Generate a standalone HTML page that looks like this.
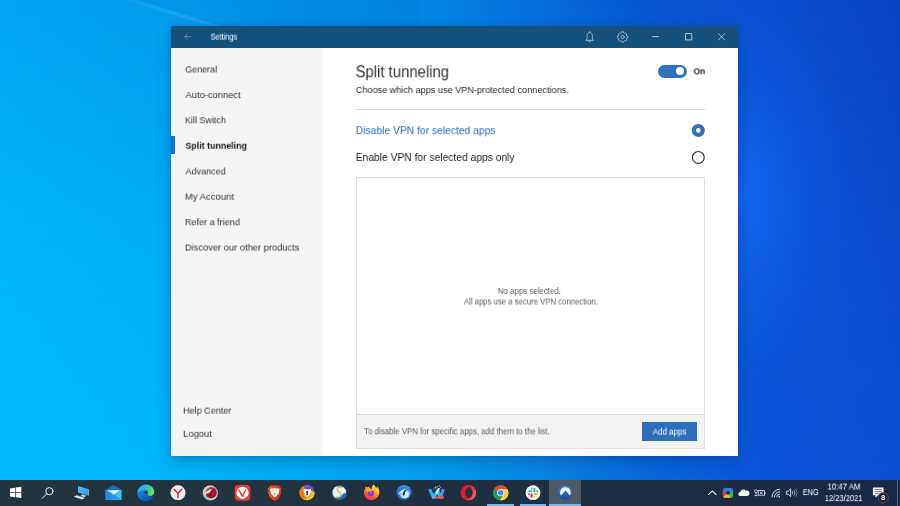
<!DOCTYPE html>
<html><head><meta charset="utf-8"><title>Settings</title>
<style>
*{box-sizing:border-box;margin:0;padding:0}
html,body{width:900px;height:506px;overflow:hidden}
body{font-family:"Liberation Sans",sans-serif;position:relative;background:#0a6fd8}
.abs{position:absolute}
.t{position:absolute;left:0;top:0;white-space:nowrap;line-height:1;transform-origin:0 0;will-change:transform}
#bgTop{position:absolute;left:0;top:0;width:900px;height:480px;
 background:linear-gradient(90deg,#03a6f5 0px,#039ff1 150px,#0392ea 300px,#0482e3 450px,#066ad9 550px,#0857d0 650px,#0a4ece 750px,#0a44c2 900px)}
#bgBot{position:absolute;left:0;top:0;width:900px;height:480px;
 background:linear-gradient(90deg,#00b9fd 0px,#00b5fa 150px,#01aaf4 300px,#0299eb 450px,#0585e2 540px,#0766d9 650px,#0b57d8 750px,#0b4dce 900px);
 -webkit-mask-image:linear-gradient(180deg,rgba(0,0,0,0) 0%,rgba(0,0,0,.75) 55%,rgba(0,0,0,1) 100%);mask-image:linear-gradient(180deg,rgba(0,0,0,0) 0%,rgba(0,0,0,.75) 55%,rgba(0,0,0,1) 100%)}
#glow{position:absolute;left:0;top:0;width:900px;height:480px;
 background:radial-gradient(ellipse 105px 190px at 742px 195px, rgba(18,108,248,.75) 0%, rgba(18,108,248,.35) 45%, rgba(18,108,248,0) 100%)}
#win{position:absolute;left:171.3px;top:26px;width:566.7px;height:429.5px;background:#fff;box-shadow:0 4px 13px rgba(0,25,80,.30),0 0 2px rgba(0,20,70,.10)}
#tb{position:absolute;left:0;top:0;width:566.7px;height:22px;background:#15507b}
#side{position:absolute;left:0;top:22px;width:151.7px;height:407.5px;background:#f5f5f5}
#taskbar{position:absolute;left:0;top:480px;width:900px;height:26px;
 background:linear-gradient(90deg,#22353e 0px,#21343f 200px,#1e3040 450px,#1c2e42 600px,#1b2b43 720px,#1a2846 820px,#1a2848 900px)}
svg{position:absolute;left:0;top:0;overflow:visible}
</style></head><body>
<div id="bgTop"></div><div id="bgBot"></div><div id="glow"></div>
<svg width="900" height="506" viewBox="0 0 900 506"><defs><linearGradient id="beam" x1="0" y1="0" x2="1" y2="0"><stop offset="0" stop-color="#fff" stop-opacity=".02"/><stop offset=".5" stop-color="#fff" stop-opacity=".09"/><stop offset="1" stop-color="#fff" stop-opacity=".05"/></linearGradient></defs><path d="M124 0H137L224 27H214Z" fill="url(#beam)"/><path d="M137 0H420L420 26H222Z" fill="#0040b0" opacity=".07"/></svg>
<div id="win">
 <div id="tb"></div>
 <div id="side">
  <div class="abs" style="left:0;top:88px;width:4px;height:18px;background:#1670dc"></div>
 </div>
</div>
<!-- main panel static shapes (page coords) -->
<div class="abs" style="left:356px;top:109px;width:349px;height:1px;background:#d9d9d9"></div>
<div class="abs" style="left:356px;top:177px;width:349px;height:272px;border:1px solid #dfdfdf;background:#fff"></div>
<div class="abs" style="left:357px;top:414px;width:347px;height:34px;background:#f3f3f3;border-top:1px solid #dadada"></div>
<div class="abs" style="left:642.3px;top:422.3px;width:54.3px;height:18.7px;background:#2e6fba"></div>
<!-- toggle -->
<div class="abs" style="left:658.2px;top:64.5px;width:28.7px;height:13.2px;border-radius:6.6px;background:#2f72bd"></div>
<div class="abs" style="left:676.3px;top:67.1px;width:8px;height:8px;border-radius:4px;background:#fff"></div>
<div id="taskbar">
 <div class="abs" style="left:549.3px;top:0;width:31.8px;height:26px;background:#4c5a67"></div>
 <div class="abs" style="left:487.4px;top:24.2px;width:26.8px;height:1.8px;background:#76b9ed"></div>
 <div class="abs" style="left:520px;top:24.2px;width:26.1px;height:1.8px;background:#76b9ed"></div>
 <div class="abs" style="left:549.3px;top:24.2px;width:31.8px;height:1.8px;background:#76b9ed"></div>
 <div class="abs" style="left:896.5px;top:0;width:1px;height:26px;background:#566178"></div>
</div>
<svg width="900" height="506" viewBox="0 0 900 506">
<defs>
 <linearGradient id="gMon" x1="0" y1="0" x2="1" y2="1"><stop offset="0" stop-color="#56bcff"/><stop offset="1" stop-color="#2a97ee"/></linearGradient>
 <linearGradient id="gMail" x1="0" y1="0" x2="1" y2="0"><stop offset="0" stop-color="#1a86dc"/><stop offset="1" stop-color="#33bdf4"/></linearGradient>
 <linearGradient id="gFlap" x1="0" y1="0" x2="1" y2="0"><stop offset="0" stop-color="#0d5cb4"/><stop offset="1" stop-color="#1678cc"/></linearGradient>
 <linearGradient id="gEdge" x1="0" y1="0" x2=".6" y2="1"><stop offset="0" stop-color="#1c8ee0"/><stop offset=".5" stop-color="#1272cc"/><stop offset="1" stop-color="#0b52a8"/></linearGradient>
 <linearGradient id="gEdgeG" x1="0" y1="0" x2="1" y2="0.25"><stop offset="0" stop-color="#2aa8ec"/><stop offset=".5" stop-color="#2ebbe2"/><stop offset=".8" stop-color="#46d296"/><stop offset="1" stop-color="#62e455"/></linearGradient>
 <radialGradient id="gDragon" cx=".55" cy=".45" r=".6"><stop offset="0" stop-color="#d81e3a"/><stop offset="1" stop-color="#8c0a1e"/></radialGradient>
 <linearGradient id="gRing" x1="0" y1="0" x2="1" y2="1"><stop offset="0" stop-color="#f4f4f4"/><stop offset=".5" stop-color="#a8a8a8"/><stop offset="1" stop-color="#e2e2e2"/></linearGradient>
 <linearGradient id="gBrave" x1="0" y1="0" x2="1" y2=".3"><stop offset="0" stop-color="#ff5a20"/><stop offset="1" stop-color="#ee2a10"/></linearGradient>
 <radialGradient id="gGlobe" cx=".5" cy=".45" r=".6"><stop offset="0" stop-color="#3aa0e0"/><stop offset="1" stop-color="#125fa8"/></radialGradient>
 <linearGradient id="gFox" x1=".8" y1="0" x2=".3" y2="1"><stop offset="0" stop-color="#fff04a"/><stop offset=".35" stop-color="#ffb52a"/><stop offset=".7" stop-color="#ff5a2a"/><stop offset="1" stop-color="#ec2a6a"/></linearGradient>
 <radialGradient id="gFoxIn" cx=".5" cy=".4" r=".6"><stop offset="0" stop-color="#9059ff"/><stop offset="1" stop-color="#5b2fd0"/></radialGradient>
 <radialGradient id="gIce" cx=".58" cy=".68" r=".7"><stop offset="0" stop-color="#f4fbff"/><stop offset=".4" stop-color="#cfe9fa"/><stop offset=".75" stop-color="#4a98de"/><stop offset="1" stop-color="#2672c8"/></radialGradient>
 <linearGradient id="gIceRing" x1="0" y1="0" x2="0" y2="1"><stop offset="0" stop-color="#3f90e4"/><stop offset="1" stop-color="#1858ae"/></linearGradient>
 <linearGradient id="gW" x1="0" y1="0" x2="1" y2="0"><stop offset="0" stop-color="#10b4f0"/><stop offset=".55" stop-color="#38c6f4"/><stop offset="1" stop-color="#5a78e0"/></linearGradient>
 <linearGradient id="gOpera" x1="0" y1="0" x2="1" y2="0.4"><stop offset="0" stop-color="#f0142a"/><stop offset=".6" stop-color="#e81a2e"/><stop offset="1" stop-color="#ff5a5a"/></linearGradient>
 <linearGradient id="gNord" x1="0" y1="0" x2="0" y2="1"><stop offset="0" stop-color="#3f8ee0"/><stop offset="1" stop-color="#1846a0"/></linearGradient>
 <linearGradient id="gW2" gradientUnits="userSpaceOnUse" x1="428" y1="0" x2="444.5" y2="0"><stop offset="0" stop-color="#10b4f0"/><stop offset=".55" stop-color="#38c6f4"/><stop offset="1" stop-color="#5a78e0"/></linearGradient>
</defs>

<!-- ===== window title bar icons ===== -->
<g fill="none" stroke="#7896b2" stroke-width=".8" stroke-linecap="round" stroke-linejoin="round">
 <path d="M190.8 36.6H184.9M187.5 33.9L184.8 36.6L187.5 39.3"/>
</g>
<g fill="none" stroke="#aebfd0" stroke-width=".85" stroke-linejoin="round" stroke-linecap="round">
 <!-- bell -->
 <path d="M589.75 31.6V32.5M586.1 40.3H593.4C592.6 39.5 592.4 38.6 592.4 37.4V35.6C592.4 33.9 591.3 32.6 589.75 32.6C588.2 32.6 587.1 33.9 587.1 35.6V37.4C587.1 38.6 586.9 39.5 586.1 40.3ZM588.6 40.6C588.6 41.5 589.1 42.1 589.75 42.1C590.4 42.1 590.9 41.5 590.9 40.6"/>
 <!-- gear -->
 <circle cx="622.6" cy="37" r="1.65"/>
 <path id="gearp" d="M621.7 31.9H623.5L623.8 33.2L624.9 33.7L626 33L627.3 34.3L626.6 35.4L627 36.4L628.3 36.7V38.5L627 38.8L626.6 39.8L627.3 40.9L626 42.2L624.9 41.5L623.8 42L623.5 43.2H621.7L621.4 42L620.3 41.5L619.2 42.2L617.9 40.9L618.6 39.8L618.2 38.8L616.9 38.5V36.7L618.2 36.4L618.6 35.4L617.9 34.3L619.2 33L620.3 33.7L621.4 33.2Z" transform="translate(622.6 37) scale(.92) translate(-622.6 -37.55)"/>
</g>
<g fill="none" stroke="#bccad7" stroke-width=".9">
 <path d="M652 36.6H659"/>
 <rect x="685.5" y="33.6" width="6.3" height="6.3"/>
 <path d="M718.2 33.4L724.9 40.1M724.9 33.4L718.2 40.1"/>
</g>

<!-- ===== radio buttons ===== -->
<circle cx="698.3" cy="130.4" r="6.5" fill="#2f72bd"/><circle cx="698.3" cy="130.4" r="2.3" fill="#fff"/>
<circle cx="698.3" cy="157.4" r="5.9" fill="#fff" stroke="#333" stroke-width="1.2"/>

<!-- ===== taskbar: start / search ===== -->
<g fill="#fff">
 <path d="M10 488.4L15 487.7V492.1H10ZM15.7 487.6L21.3 486.8V492.1H15.7ZM10 492.8H15V497.2L10 496.5ZM15.7 492.8H21.3V498.1L15.7 497.3Z"/>
</g>
<g fill="none" stroke="#eef1f3" stroke-width="1" stroke-linecap="round">
 <circle cx="49.4" cy="491.2" r="3.6"/><path d="M46.7 493.9L42.3 498.3"/>
</g>

<!-- This PC -->
<g>
 <path d="M78 486L88.2 489V495.5L78 492.4Z" fill="url(#gMon)"/>
 <path d="M88.2 489L88.8 489.2V495.7L88.2 495.5Z" fill="#d8e4ee"/>
 <path d="M82.2 494.2L86.5 495.5L84.6 497.2L80.8 495.9Z" fill="#b9c3cc"/>
 <path d="M76.8 495.3L84.8 498L82.2 499.6L73.6 496.8Z" fill="#e2e6ea"/>
</g>
<!-- Mail -->
<g>
 <path d="M105.2 489.7L113.3 485L121.4 489.7Z" fill="url(#gFlap)"/>
 <rect x="105.2" y="489.7" width="16.2" height="10.4" fill="url(#gMail)"/>
 <path d="M114 494.4L121.4 489.9V500.1Z" fill="#3cc6f7"/>
 <path d="M114 494.4L121.4 500.1H118L112.5 495.2Z" fill="#1a8fe0" opacity=".7"/>
 <path d="M107 490.3H119.8L114 494.5Z" fill="#f5f6f7"/>
</g>
<!-- Edge -->
<g>
 <path d="M137.9 490.4C136.7 494.4 138.2 498.5 141.4 500.3C144.6 502 148.8 501.4 151.2 499.4C152.3 498.5 152.9 497.5 153 496.7L150 496.3L147 495.7L146.4 493L146 489.8C142.6 489.1 139.4 489.6 137.9 490.4Z" fill="url(#gEdge)"/>
 <path d="M137.6 493.2C137.3 488.2 141 484.6 146 484.6C151 484.6 154.3 488.4 154.2 492C154.1 494.7 152 495.9 150 495.9C148.3 495.9 147.1 495.4 147.3 494.6C147.5 494 148 493.4 148 492.4C148 490.8 146.6 489.7 144.8 489.7C141.6 489.7 138.6 491.6 137.6 493.2Z" fill="url(#gEdgeG)"/>
 <circle cx="145.5" cy="492.5" r="1.45" fill="#1c3b52"/>
</g>
<!-- Yandex -->
<g>
 <circle cx="178" cy="492.7" r="7.4" fill="#f3f3f3"/>
 <circle cx="178" cy="492.7" r="7.1" fill="none" stroke="#d9d9d9" stroke-width=".6"/>
 <path d="M174.1 489.3L178 493.3L181.8 489.3M178 493.2V497.5" fill="none" stroke="#e11d24" stroke-width="1.45" stroke-linecap="round" stroke-linejoin="round"/>
</g>
<!-- Comodo Dragon -->
<g>
 <circle cx="210.3" cy="492.8" r="7.6" fill="url(#gRing)"/>
 <circle cx="211.2" cy="492.7" r="5.5" fill="url(#gDragon)"/>
 <path d="M205.6 490.6C207.4 488.2 210.4 487 213.2 487.6C210.6 488.2 208 489.6 206.2 491.8Z" fill="#e2606e" opacity=".8"/>
 <path d="M204 495.6C204.6 492.4 208.4 489.4 213.6 488.4C211.6 489.8 210.2 491.2 209.4 493C207.6 493.2 205.4 494.2 204 495.6Z" fill="#f4f4f4"/>
 <path d="M213.8 488.6C212.4 489.6 211.6 490.8 211.2 492.2C210.9 493.4 210.8 494.6 210.4 495.6" fill="none" stroke="#2a0a10" stroke-width=".9" stroke-linecap="round"/>
</g>
<!-- Vivaldi -->
<g>
 <rect x="234.7" y="485" width="15.6" height="15.7" rx="3.6" fill="#ef3939"/>
 <circle cx="242.5" cy="492.8" r="6.1" fill="#fff"/>
 <path d="M239 490.2L242.4 496.2L245.9 490" fill="none" stroke="#e83838" stroke-width="1.5" stroke-linecap="round" stroke-linejoin="round"/>
</g>
<!-- Brave -->
<g>
 <path d="M270.6 485.6H278.9L280 486.8L281.6 488.6L281 491L281.4 492.4L279.6 497.4L277 499.6L274.75 501L272.5 499.6L269.9 497.4L268.1 492.4L268.5 491L267.9 488.6L269.5 486.8Z" fill="url(#gBrave)"/>
 <path d="M271 488.2L273 488.6L274.75 488.2L276.5 488.6L278.5 488.2L279.6 490L278.8 492L279 493L277.2 495L276.2 496.6L274.75 497.6L273.3 496.6L272.3 495L270.5 493L270.7 492L269.9 490Z" fill="#fff"/>
 <path d="M272.3 490.2L273.6 490.6L273.2 491.4ZM277.2 490.2L275.9 490.6L276.3 491.4ZM274.75 492L275.6 494.2L274.75 495L273.9 494.2Z" fill="#f8532a"/>
</g>
<!-- Avast Secure -->
<g>
 <circle cx="307" cy="492.7" r="7.5" fill="#f39a18"/>
 <path d="M303.2 486.2C308.6 483.6 314.6 487 314.6 493.4C313.4 491.6 311.8 490.6 310.2 490.2C307 489.6 304.2 488.6 303.2 486.2Z" fill="#7447e8"/>
 <path d="M303.2 486.2C303.8 487.8 305 488.8 306.4 489.2C304.4 490.4 303.4 492.6 303.8 495C304.2 497 305.6 498.4 307.4 499C304.4 500 300.6 498 299.7 494C299 490.8 300.6 487.6 303.2 486.2Z" fill="#f07812"/>
 <path d="M314.5 492.6C314.9 496.4 312 500 307.6 500.2C305.2 500.2 303.4 499.4 302.2 498C304.6 499.2 308 499 310 497C311.6 495.4 311.8 493 311 491C312.4 491.2 313.8 491.8 314.5 492.6Z" fill="#f6c81e"/>
 <path d="M303.8 489C305.6 489.5 308.8 489.5 310.8 489C311.4 492 310.4 495.4 307.3 497.2C304.4 495.4 303.2 492 303.8 489Z" fill="#fff"/>
 <path d="M307.1 491A1.2 1.2 0 0 1 307.8 493.2L308 495.2H306.2L306.4 493.2A1.2 1.2 0 0 1 307.1 491Z" fill="#3b3768"/>
</g>
<!-- Slimjet globe -->
<g>
 <circle cx="339.2" cy="492.7" r="7.5" fill="url(#gGlobe)"/>
 <path d="M332.8 490.4C333.6 488.4 335.4 487 337.2 486.6L340 486.4L343 487C344.8 488 345.8 489.8 346.2 491.6L345.2 493.4L343.4 493.2L342 495L340 495.4L338.4 497L336 497.8L334.6 497.4C333.2 496 332.4 493.4 332.8 490.4Z" fill="#f4f7fb" opacity=".95"/>
 <path d="M341.7 487.4C339.6 486.8 337.2 487.4 337 489.2C336.8 491.6 341.3 492 341.1 494.6C340.9 496.9 337.9 497.7 336.2 496.9" fill="none" stroke="#eec040" stroke-width="1.45" stroke-linecap="round"/>
</g>
<!-- Firefox -->
<g>
 <path d="M373.6 484.6C375 486 375.8 487.4 376 488.6C376.8 487.8 377 487 376.8 486.2C378.8 488 379.6 490.8 379.2 493.6C378.6 497.6 375.2 500.4 371.2 500.3C367.2 500.2 364 497 364 493C364 491 364.6 489.4 365.4 488.4C365.2 487.6 365.3 486.8 365.6 486.2L367 487.6C367.4 487.4 367.8 487.3 368.2 487.3L368.6 486.5L369.6 487.7C370 488.3 370.6 488.9 371.5 489.3C371.6 487.6 372.2 485.8 373.6 484.6Z" fill="url(#gFox)"/>
 <circle cx="370.9" cy="493.1" r="3" fill="url(#gFoxIn)"/>
 <path d="M366 490.8C367.4 489.4 369.2 489 370.8 489.6L372.8 491C371.6 490.8 370.6 491.2 370.2 492C369 491.6 367.2 491.2 366 490.8Z" fill="#ffa424"/>
</g>
<!-- IceDragon -->
<g>
 <circle cx="404.1" cy="492.6" r="7.6" fill="url(#gIceRing)"/>
 <circle cx="404.4" cy="493" r="5.5" fill="url(#gIce)"/>
 <path d="M398.2 494.6C398.8 491.8 402.4 489.2 407.6 488.4C405.6 489.6 404.2 490.8 403.4 492.4C401.6 492.6 399.6 493.4 398.2 494.6Z" fill="#d6ecfb" opacity=".95"/>
 <path d="M407.8 488.4C406.2 489.4 405.5 490.8 405.1 492.2C404.7 493.8 404.6 495.4 404 496.8C403.6 495.6 403.3 494.6 402.6 494C403.2 491.6 404.8 489.6 407.8 488.4Z" fill="#0c1c34"/>
</g>
<!-- Waterfox-like W -->
<g>
 <path d="M430 490.2L433.5 497.5L437.8 490.6L440.7 497.5L443 490.2" fill="none" stroke="url(#gW2)" stroke-width="3" stroke-linecap="round" stroke-linejoin="round"/>
 <path d="M435.4 492.4L438.2 487.8L440 488.6L437.2 494.2Z" fill="#d4f4fd"/>
 <circle cx="435.6" cy="487.6" r=".9" fill="#7adcf8"/><circle cx="437.6" cy="486.4" r=".7" fill="#5ccef4"/><circle cx="439.6" cy="485.9" r=".6" fill="#4ec8f2"/><circle cx="433.8" cy="489" r=".6" fill="#6ad6f6"/><circle cx="440.6" cy="487.4" r=".5" fill="#66d2f6"/>
 <rect x="434.5" y="496.2" width="9.6" height="2.5" rx="1.2" fill="#f0525c"/>
</g>
<!-- Opera -->
<g>
 <path fill-rule="evenodd" d="M468.4 485A7.7 7.7 0 1 0 468.4 500.4A7.7 7.7 0 1 0 468.4 485ZM468.9 487.3C471 487.3 472.6 489.8 472.6 492.7C472.6 495.6 471 498.1 468.9 498.1C466.8 498.1 465.2 495.6 465.2 492.7C465.2 489.8 466.8 487.3 468.9 487.3Z" fill="url(#gOpera)"/>
</g>
<!-- Chrome -->
<g>
 <circle cx="500.7" cy="492.7" r="7.6" fill="#e2493b"/>
 <path d="M500.7 492.7L494.1 488.9A7.6 7.6 0 0 0 500.2 500.3L504 493.7Z" fill="#1e9d53"/>
 <path d="M500.7 492.7L507.3 488.9A7.6 7.6 0 0 1 500.2 500.3L504.2 493.4Z" fill="#fcd03c"/>
 <path d="M500.7 489.2H507.5A7.6 7.6 0 0 1 500.2 500.3L503.8 494.2Z" fill="#fcd03c"/>
 <path d="M494.1 488.9L497.6 494.6L500.3 500.3A7.6 7.6 0 0 1 494.1 488.9Z" fill="#1e9d53"/>
 <circle cx="500.7" cy="492.7" r="3.6" fill="#f4f6f8"/>
 <circle cx="500.7" cy="492.7" r="2.8" fill="#4a8cf5"/>
</g>
<!-- Slack -->
<g>
 <circle cx="533" cy="492.7" r="7.4" fill="#fdfdfd"/>
 <g stroke-linecap="round" stroke-width="1.9" fill="none">
  <path d="M528.9 491.3H531.6" stroke="#36c5f0"/><path d="M531.65 488.7V488.8" stroke="#36c5f0"/>
  <path d="M534.4 488.6V491.3" stroke="#2eb67d"/><path d="M537 491.3H537.1" stroke="#2eb67d"/>
  <path d="M534.4 494.1H537.1" stroke="#ecb22e"/><path d="M534.35 496.7V496.8" stroke="#ecb22e"/>
  <path d="M531.6 494.1V496.8" stroke="#e01e5a"/><path d="M528.95 494.1H529.05" stroke="#e01e5a"/>
 </g>
</g>
<!-- NordVPN -->
<g>
 <circle cx="565.2" cy="492.7" r="7" fill="url(#gNord)"/>
 <path d="M561 495.4C559.4 492.8 560.1 489.6 562.6 488C565.2 486.5 568.6 487.2 570.1 489.9C571.1 491.7 571 493.8 569.8 495.4L566.6 491.4L565.6 490.4L564.6 491.4Z" fill="#f2f6fb"/>
</g>

<!-- ===== system tray ===== -->
<path d="M708.2 494.9L712.3 490.9L716.4 494.9" fill="none" stroke="#fff" stroke-width="1.1"/>
<!-- colourful swirl -->
<g>
 <rect x="722.8" y="487.9" width="10.3" height="9.9" rx="2.6" fill="#2f7ee8"/>
 <path d="M728 492.8L733.1 490V495.2C733.1 496.6 732 497.8 730.5 497.8H728Z" fill="#2fb550"/>
 <path d="M728 492.8L730.6 497.8H725.4C724.4 497.8 723.6 497.4 723.2 496.6Z" fill="#f6c51c"/>
 <path d="M728 492.8L723.2 496.8C722.9 496.3 722.8 495.8 722.8 495.2V491.4Z" fill="#e8342c"/>
 <circle cx="728" cy="492.8" r="1.9" fill="#1b2a44"/>
</g>
<!-- onedrive -->
<path d="M740.6 496C739.2 496 738.3 495 738.3 493.9C738.3 492.8 739.2 491.9 740.3 491.9C740.6 490.4 741.9 489.4 743.3 489.4C744.4 489.4 745.3 489.9 745.9 490.8C746.3 490.6 746.7 490.5 747.1 490.5C748.5 490.5 749.5 491.7 749.5 493.2C749.5 494.8 748.4 496 747 496Z" fill="#f0f2f5"/>
<!-- battery/plug -->
<g fill="none" stroke="#e6e9ee" stroke-width=".8">
 <rect x="758.2" y="490.6" width="6.3" height="4.6"/>
 <path d="M765 492V494"/>
 <circle cx="756" cy="491.2" r="1.5"/>
 <path d="M756 492.7V495.6M754.6 495.6H757.6M759.8 491.6L762.8 494.2M762.8 491.6L759.8 494.2"/>
</g>
<!-- wifi -->
<g fill="none" stroke="#e9ecf0" stroke-width=".9">
 <path d="M772 497.4A8 8 0 0 1 780 489.2"/>
 <path d="M774.4 497.4A5.6 5.6 0 0 1 780 491.7"/>
 <path d="M776.7 497.4A3.3 3.3 0 0 1 780 494.1"/>
 <rect x="778.6" y="496.1" width="1.3" height="1.3" fill="#fff" stroke="none"/>
</g>
<!-- volume -->
<g fill="none" stroke="#e9ecf0" stroke-width=".85" stroke-linejoin="round">
 <path d="M786.4 491.2H788.2L790.6 488.8V496.6L788.2 494.2H786.4Z"/>
 <path d="M792.2 491.2C792.9 492.1 792.9 493.3 792.2 494.2"/>
 <path d="M793.8 489.9C795.2 491.6 795.2 493.8 793.8 495.5" opacity=".75"/>
 <path d="M795.4 488.6C797.4 491 797.4 494.4 795.4 496.8" opacity=".5"/>
</g>
<!-- notifications -->
<g>
 <path d="M872.9 487.4H883.6V495.3H878L875.4 497.8V495.3H872.9Z" fill="#f4f5f7"/>
 <path d="M874.8 489.5H881.7M874.8 491.4H881.7M874.8 493.3H881.7" stroke="#5c6a84" stroke-width=".8"/>
 <circle cx="883.2" cy="497.8" r="5.1" fill="#1c1f2a" stroke="#4c5363" stroke-width="1"/>
</g>

</svg>
<div class="t" style="font-size:8.94px;color:#ffffff;font-weight:400;transform:translate(210.59px,32.68px) scaleX(0.8254) rotate(.03deg)">Settings</div>
<div class="t" style="font-size:9.67px;color:#303030;font-weight:400;transform:translate(185.14px,64.46px) scaleX(0.9293) rotate(.03deg)">General</div>
<div class="t" style="font-size:9.81px;color:#303030;font-weight:400;transform:translate(185.6px,90.05px) scaleX(0.9524) rotate(.03deg)">Auto-connect</div>
<div class="t" style="font-size:9.81px;color:#303030;font-weight:400;transform:translate(184.91px,115.25px) scaleX(0.9202) rotate(.03deg)">Kill Switch</div>
<div class="t" style="font-size:9.81px;color:#1a1a1a;font-weight:700;transform:translate(185.37px,140.75px) scaleX(0.9056) rotate(.03deg)">Split tunneling</div>
<div class="t" style="font-size:9.81px;color:#303030;font-weight:400;transform:translate(185.6px,166.45px) scaleX(0.9209) rotate(.03deg)">Advanced</div>
<div class="t" style="font-size:9.81px;color:#303030;font-weight:400;transform:translate(184.87px,191.75px) scaleX(0.9709) rotate(.03deg)">My Account</div>
<div class="t" style="font-size:9.81px;color:#303030;font-weight:400;transform:translate(184.91px,217.25px) scaleX(0.9259) rotate(.03deg)">Refer a friend</div>
<div class="t" style="font-size:9.81px;color:#303030;font-weight:400;transform:translate(184.89px,242.55px) scaleX(0.9518) rotate(.03deg)">Discover our other products</div>
<div class="t" style="font-size:9.81px;color:#303030;font-weight:400;transform:translate(183.11px,405.65px) scaleX(0.9243) rotate(.03deg)">Help Center</div>
<div class="t" style="font-size:9.81px;color:#303030;font-weight:400;transform:translate(183.08px,428.85px) scaleX(0.9641) rotate(.03deg)">Logout</div>
<div class="t" style="font-size:15.92px;color:#303030;font-weight:400;transform:translate(355.6px,64.27px) scaleX(0.9354) rotate(.03deg)">Split tunneling</div>
<div class="t" style="font-size:9.23px;color:#262626;font-weight:400;transform:translate(355.81px,85.94px) scaleX(0.9893) rotate(.03deg)">Choose which apps use VPN-protected connections.</div>
<div class="t" style="font-size:10.97px;color:#2a6bb6;font-weight:400;transform:translate(355.76px,125.16px) scaleX(0.9399) rotate(.03deg)">Disable VPN for selected apps</div>
<div class="t" style="font-size:10.97px;color:#1c1c1c;font-weight:400;transform:translate(355.76px,151.96px) scaleX(0.9371) rotate(.03deg)">Enable VPN for selected apps only</div>
<div class="t" style="font-size:8.36px;color:#5c5c5c;font-weight:400;transform:translate(497.79px,286.97px) scaleX(0.9456) rotate(.03deg)">No apps selected.</div>
<div class="t" style="font-size:8.36px;color:#5c5c5c;font-weight:400;transform:translate(463.9px,297.47px) scaleX(0.9289) rotate(.03deg)">All apps use a secure VPN connection.</div>
<div class="t" style="font-size:8.5px;color:#5c5c5c;font-weight:400;transform:translate(364.27px,427.25px) scaleX(0.9237) rotate(.03deg)">To disable VPN for specific apps, add them to the list.</div>
<div class="t" style="font-size:8.65px;color:#ffffff;font-weight:400;transform:translate(652.8px,427.63px) scaleX(0.9186) rotate(.03deg)">Add apps</div>
<div class="t" style="font-size:8.36px;color:#222222;font-weight:700;transform:translate(693.55px,67.37px) scaleX(1.014) rotate(.03deg)">On</div>
<div class="t" style="font-size:8.65px;color:#ffffff;font-weight:400;transform:translate(802.77px,488.13px) scaleX(0.8406) rotate(.03deg)">ENG</div>
<div class="t" style="font-size:8.5px;color:#ffffff;font-weight:400;transform:translate(827.51px,482.55px) scaleX(0.9188) rotate(.03deg)">10:47 AM</div>
<div class="t" style="font-size:8.65px;color:#ffffff;font-weight:400;transform:translate(824.84px,494.13px) scaleX(0.8738) rotate(.03deg)">12/23/2021</div>
<div class="t" style="font-size:7.63px;color:#ffffff;font-weight:700;transform:translate(881.16px,493.99px) scaleX(0.96) rotate(.03deg)">8</div>
</body></html>
